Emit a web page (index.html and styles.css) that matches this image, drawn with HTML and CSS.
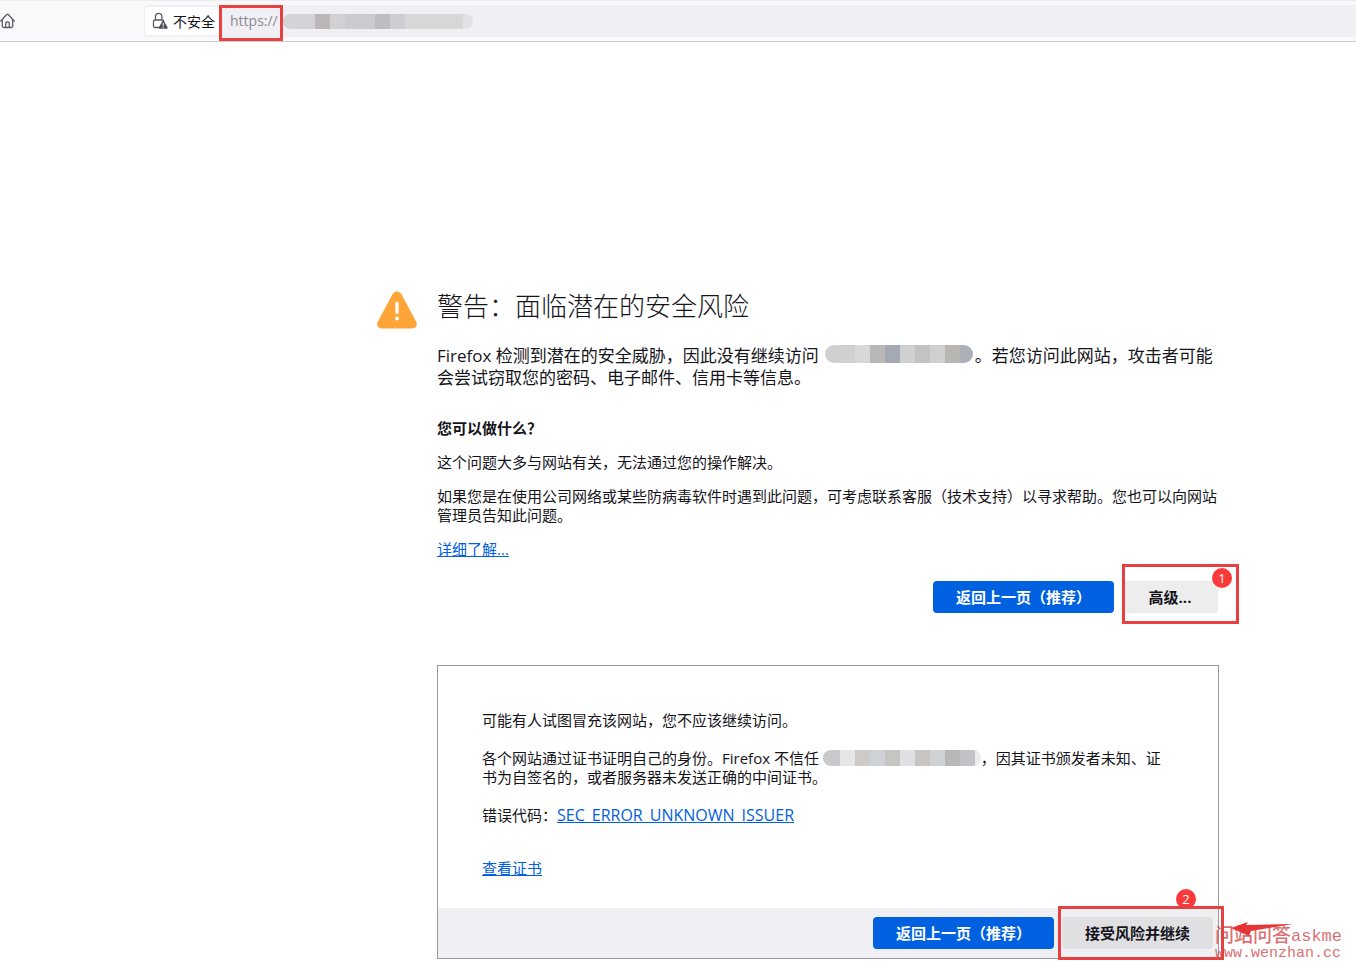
FILE: index.html
```html
<!DOCTYPE html>
<html lang="zh-CN">
<head>
<meta charset="utf-8">
<title>警告：面临潜在的安全风险</title>
<link rel="stylesheet" href="styles.css">
</head>
<body>
<header class="toolbar">
  <button class="home" aria-label="主页">
    <svg width="16" height="16" viewBox="0 0 16 16" fill="none" stroke="#5b5b66" stroke-width="1.3" stroke-linejoin="round" stroke-linecap="round"><path d="M.8 8 6.500 1.700q1-.9 2 0L14.200 8M2.300 6.800V13q0 1.500 1.500 1.500h7.400q1.500 0 1.500-1.500V6.800M5.700 14.300V10.500q0-1.500 1.800-1.500t1.800 1.500v3.800"/></svg>
  </button>
  <div class="address">
    <button class="identity">
      <svg width="16" height="18" viewBox="0 0 16 18"><path d="M3.500 8V4.500a3.200 3.200 0 0 1 6.400 0V8M7.500 15.500H3q-1.500 0-1.500-1.500V9.500Q1.500 8 3 8h7.300q1.200 0 1.500 1" fill="none" stroke="#5b5b66" stroke-width="1.3"/><path d="M10.400 9.200q.8-1.300 1.600 0l3.500 6.100q.6 1.400-.9 1.400H7.800q-1.500 0-.9-1.400z" fill="#4b4b55"/><path d="M11.200 11v2.800M11.200 14.600v1.200" stroke="#fff" stroke-width="1.100"/></svg>
      <span>不安全</span>
    </button>
    <div class="scheme"><span>https://</span></div>
    <span class="redacted redacted-url"></span>
  </div>
</header>
<main class="page">
  <svg class="warning" width="40" height="38" viewBox="0 0 40 38"><path d="M15.500 3.200q4.500-6 9 0l14.700 27.500q2.200 6.300-4 6.800H4.800q-6.200-.5-4-6.800z" fill="#ffa436"/><path d="M20 12v9.500" stroke="#fff" stroke-width="3.200" stroke-linecap="round"/><circle cx="20" cy="27.500" r="2" fill="#fff"/></svg>
  <div class="content">
    <h1>警告：面临潜在的安全风险</h1>
    <p class="lede">Firefox 检测到潜在的安全威胁，因此没有继续访问<span class="redacted redacted-host"></span>。若您访问此网站，攻击者可能会尝试窃取您的密码、电子邮件、信用卡等信息。</p>
    <h2>您可以做什么？</h2>
    <p>这个问题大多与网站有关，无法通过您的操作解决。</p>
    <p>如果您是在使用公司网络或某些防病毒软件时遇到此问题，可考虑联系客服（技术支持）以寻求帮助。您也可以向网站管理员告知此问题。</p>
    <p><a href="#">详细了解...</a></p>
    <div class="actions">
      <button class="btn primary">返回上一页（推荐）</button>
      <div class="marked">
        <button class="btn">高级...</button>
        <div class="frame frame-one"></div>
        <span class="badge badge-one">1</span>
      </div>
    </div>
    <section class="panel">
      <div class="details">
        <p>可能有人试图冒充该网站，您不应该继续访问。</p>
        <p>各个网站通过证书证明自己的身份。Firefox 不信任 <span class="redacted redacted-cert"></span>，因其证书颁发者未知、证书为自签名的，或者服务器未发送正确的中间证书。</p>
        <p>错误代码：<a class="code" href="#">SEC_ERROR_UNKNOWN_ISSUER</a></p>
        <p class="certificate"><a href="#">查看证书</a></p>
      </div>
      <div class="actions panel-actions">
        <button class="btn primary">返回上一页（推荐）</button>
        <div class="marked">
          <button class="btn accept">接受风险并继续</button>
          <span class="badge badge-two">2</span>
          <div class="frame frame-two"></div>
          <svg class="arrow" width="62" height="14" viewBox="0 0 62 14"><path d="M0 6 17 0 15 3 62 2 20 9 18 14z" fill="#ee2e2e"/></svg>
          <div class="watermark"><div class="brand"><b>问站问答</b>askme</div><div>www.wenzhan.cc</div></div>
        </div>
      </div>
    </section>
  </div>
</main>
</body>
</html>
```
FILE: styles.css
```css
* { box-sizing: border-box; }
body {
  margin: 0;
  background: #fff;
  color: #15141a;
  font: 15px/19px "Open Sans", "Noto Sans CJK SC", sans-serif;
}
button { font: inherit; color: inherit; border: 0; margin: 0; }
.toolbar {
  display: flex;
  align-items: center;
  justify-content: space-between;
  height: 42px;
  background: #f9f9fb;
  border-top: 1px solid #ededf0;
  border-bottom: 1px solid #ccccd0;
}
.home { display: flex; padding: 0; background: none; }
.address {
  display: flex;
  align-items: center;
  width: calc(100% - 144px);
  height: 32px;
  background: #f0f0f4;
  border-radius: 4px 0 0 4px;
}
.identity {
  display: flex;
  align-items: center;
  gap: 5px;
  width: 75px;
  height: 28px;
  margin-left: 1px;
  padding: 0 0 0 7px;
  background: #fff;
  border-radius: 3px;
  font-size: 14px;
  white-space: nowrap;
}
.identity svg { flex: none; }
.scheme {
  align-self: flex-start;
  width: 64px;
  height: 36px;
  margin-left: -1px;
  padding-left: 8px;
  border: 3px solid #e84040;
  color: #8a8a92;
  font-size: 14px;
  line-height: 26px;
}
.redacted { display: inline-block; height: 18px; border-radius: 9px; }
.redacted-url {
  width: 190px;
  height: 15px;
  background: linear-gradient(90deg, #d4d4d8 0 32px, #bcb5ba 32px 47px, #d1d1d5 47px 62px, #cacacf 62px 92px, #bdbdc3 92px 107px, #ceced2 107px 122px, #d7d7da 122px 180px, #e2e2e6 180px);
}
.redacted-host {
  width: 148px;
  margin: 0 2px 0 6px;
  vertical-align: -1px;
  background: linear-gradient(90deg, #d0d0d0 0 30px, #d8d8d8 30px 45px, #bab7b7 45px 60px, #a5a9b3 60px 75px, #d0d0d2 75px 90px, #c4c3c4 90px 105px, #d0d0d0 105px 120px, #b8b5b5 120px 135px, #adb0b7 135px);
}
.redacted-cert {
  width: 158px;
  height: 16px;
  vertical-align: -2px;
  background: linear-gradient(90deg, #c9c9cb 0 17px, #e6e6e6 17px 32px, #cecac9 32px 47px, #cfd3d7 47px 62px, #c7c4c4 62px 77px, #e0e0e3 77px 92px, #c9c5c5 92px 107px, #ced2d5 107px 122px, #bab6b6 122px 137px, #c1c2c6 137px 152px, #eaeaec 152px);
}
.page { display: flex; gap: 20px; padding: 247px 137px 10px 377px; }
.warning { flex: none; margin-top: 2px; }
.content { flex: 1; min-width: 0; }
h1 { margin: 0 0 22px; font-size: 26px; line-height: 34px; font-weight: 300; }
h2 { margin: 0 0 15px; font-size: 15px; line-height: 19px; font-weight: 700; }
p { margin: 0 0 15px; }
.lede { margin-bottom: 30px; font-size: 17px; line-height: 22px; }
a { color: #0060df; text-decoration: underline; }
.code { font-size: 16px; }
.actions { display: flex; justify-content: flex-end; gap: 8px; margin-top: 22px; padding-right: 1px; }
.marked { position: relative; }
.btn {
  min-width: 96px;
  height: 32px;
  padding: 0 23px;
  background: #ededee;
  border-radius: 4px;
  font-weight: 700;
  line-height: 30px;
  white-space: nowrap;
}
.primary { background: #0061e0; color: #fff; }
.accept { background: #e0e0e3; }
.frame { position: absolute; border: 3px solid #e84040; pointer-events: none; }
.frame-one { inset: -17px -21px -11px 0; }
.frame-two { inset: -11px -11px -11px -4px; }
.badge {
  position: absolute;
  width: 20px;
  height: 20px;
  border-radius: 50%;
  background: #fa3a3a;
  color: #fff;
  font-size: 13px;
  line-height: 20px;
  text-align: center;
}
.badge-one { top: -13px; right: -14px; z-index: 1; }
.badge-two { top: -28px; right: 17px; }
.panel { margin-top: 52px; border: 1px solid #9a9a9e; }
.details { padding: 45px 44px 30px; }
.details p { margin: 0 0 19px; }
.details .certificate { margin: 34px 0 0; }
.panel-actions { margin: 0; padding: 9px 5px; background: #f0f0f4; }
.watermark {
  position: absolute;
  top: 11px;
  left: 153px;
  color: rgba(208, 72, 76, 0.8);
  font: 15px/16px "Liberation Mono", "Noto Sans CJK SC", monospace;
  white-space: nowrap;
}
.brand { display: flex; font-size: 17px; line-height: 18px; }
.brand b { font-size: 19px; font-weight: 500; }
.arrow { position: absolute; top: 5px; left: 169px; }
```
